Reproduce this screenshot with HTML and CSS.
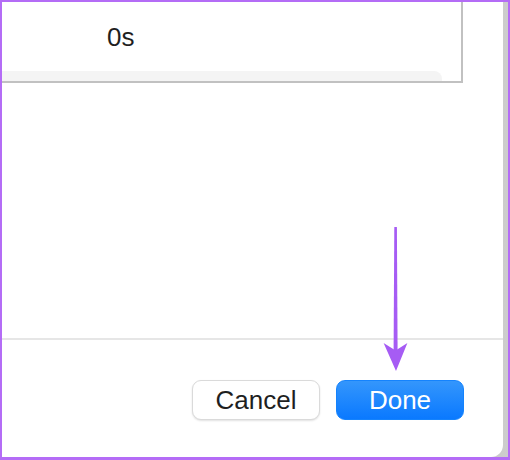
FILE: index.html
```html
<!DOCTYPE html>
<html>
<head>
<meta charset="utf-8">
<link rel="stylesheet" href="styles.css">
</head>
<body>
<div class="frame">
  <div class="dialog">
    <div class="panel">
      <div class="cell">0s</div>
      <div class="strip"></div>
    </div>
    <div class="spacer"></div>
    <div class="divider"></div>
    <div class="footer">
      <button class="btn cancel">Cancel</button>
      <button class="btn done">Done</button>
    </div>
  </div>
  <svg class="arrow" width="30" height="150" viewBox="0 0 30 150">
    <polygon points="14.3,2 16.9,2 17.6,126 13.6,126" fill="#a65cf4"/>
    <polygon points="16,146 3.6,118 15.6,125.5 27.4,118" fill="#a65cf4"/>
  </svg>
</div>
</body>
</html>
```

FILE: styles.css
```css
html, body {
  margin: 0;
  padding: 0;
  width: 510px;
  height: 460px;
  overflow: hidden;
  font-family: "Liberation Sans", Arial, sans-serif;
}

.frame {
  position: relative;
  box-sizing: border-box;
  width: 510px;
  height: 460px;
  border-style: solid;
  border-color: #b46cf6;
  border-width: 2px 2px 3px 2px;
  background: linear-gradient(to right, #9d9d9d 0, #a9a9a9 60%, #cdcdcd 100%);
  display: flex;
}

.dialog {
  width: 501px;
  height: 455px;
  background: #ffffff;
  border-bottom-right-radius: 12px;
  display: flex;
  flex-direction: column;
}

.panel {
  width: 459px;
  height: 79px;
  border-right: 2px solid #c1c1c1;
  border-bottom: 2px solid #c1c1c1;
  display: flex;
  flex-direction: column;
  flex-shrink: 0;
}

.cell {
  height: 69px;
  box-sizing: border-box;
  padding-left: 105px;
  padding-top: 20px;
  font-size: 26px;
  line-height: 30px;
  color: #1f1f1f;
}

.strip {
  width: 440px;
  height: 10px;
  background: #f4f4f4;
  border-top-right-radius: 8px;
}

.spacer {
  height: 255px;
  flex-shrink: 0;
}

.divider {
  height: 2px;
  background: #e6e6e6;
  flex-shrink: 0;
}

.footer {
  display: flex;
  justify-content: flex-end;
  gap: 16px;
  padding: 40px 39px 0 0;
}

.btn {
  box-sizing: border-box;
  width: 128px;
  height: 40px;
  margin: 0;
  padding: 0;
  border-radius: 9px;
  font-family: "Liberation Sans", Arial, sans-serif;
  font-size: 26px;
  line-height: 38px;
  text-align: center;
}

.cancel {
  background: #ffffff;
  color: #1f1f1f;
  border: 1px solid #dadada;
  box-shadow: 0 1px 2px rgba(0, 0, 0, 0.12);
}

.done {
  background: linear-gradient(to bottom, #3496fc, #0a79ff);
  color: #ffffff;
  border: 1px solid #1583fd;
}

.arrow {
  position: absolute;
  left: 378px;
  top: 223px;
}
```
